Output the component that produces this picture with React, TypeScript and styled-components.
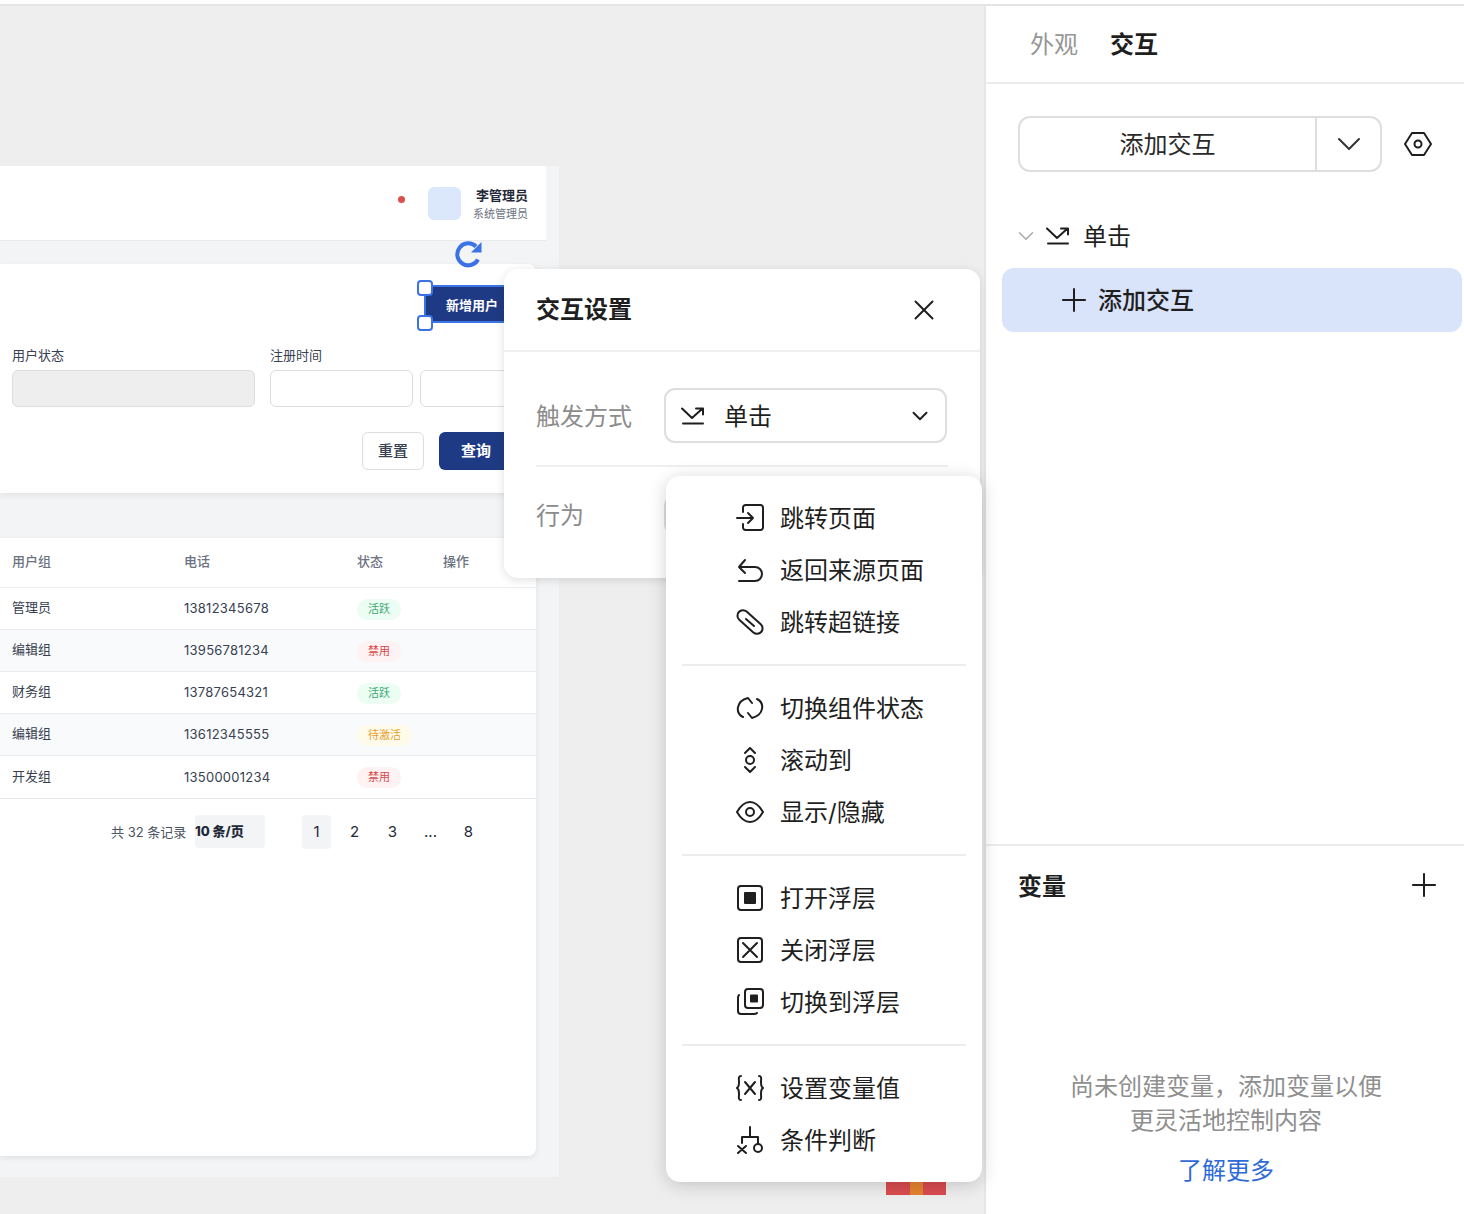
import React from 'react';
import styled, { createGlobalStyle } from 'styled-components';
import { ChevronDown, Plus, X } from 'lucide-react';

const GlobalStyle = createGlobalStyle`
  html, body { margin: 0; padding: 0; background: #fff; }
  body { font-family: Inter, "Noto Sans CJK SC", sans-serif; color: #1f1f1f; }
  * { box-sizing: border-box; }
`;

const users = [
  { group: '管理员', phone: '13812345678', status: '活跃', tone: 'green' },
  { group: '编辑组', phone: '13956781234', status: '禁用', tone: 'red' },
  { group: '财务组', phone: '13787654321', status: '活跃', tone: 'green' },
  { group: '编辑组', phone: '13612345555', status: '待激活', tone: 'amber' },
  { group: '开发组', phone: '13500001234', status: '禁用', tone: 'red' },
];

const tones: Record<string, { bg: string; fg: string }> = {
  green: { bg: '#ecfdf3', fg: '#3aa872' },
  red: { bg: '#fef2f2', fg: '#d9474a' },
  amber: { bg: '#fffbeb', fg: '#e59e2e' },
};

const IconSvg = styled.svg.attrs({ fill: 'none', stroke: 'currentColor' })<{ $w?: number; $h?: number }>`
  display: block;
  flex: none;
  width: ${(p) => p.$w ?? 28}px;
  height: ${(p) => p.$h ?? 28}px;
  stroke-width: 2;
  stroke-linecap: round;
  stroke-linejoin: round;
`;

const ClickIcon = () => (
  <IconSvg viewBox="0 0 23 18" $w={23} $h={18}>
    <path d="M1 1.5 L11 11 L21.5 1.5 M15 1.5 H22 V7.5" />
    <path d="M2 16.5 H22" />
  </IconSvg>
);

const HexIcon = () => (
  <IconSvg viewBox="0 0 28 26" $w={28} $h={26}>
    <path d="M8 2 H20 L27 13 L20 24 H8 L1 13 Z" />
    <circle cx="14" cy="13" r="3.5" />
  </IconSvg>
);

const menuIcons: Record<string, React.ReactNode> = {
  jump: (
    <>
      <path d="M7 8 V3.5 A2.5 2.5 0 0 1 9.5 1 H24.5 A2.5 2.5 0 0 1 27 3.5 V23.5 A2.5 2.5 0 0 1 24.5 26 H9.5 A2.5 2.5 0 0 1 7 23.5 V20" />
      <path d="M1 14 H17 M12 9 L17 14 L12 19" />
    </>
  ),
  back: <path d="M9 4 L3 11 L9 17 M3 11 H19 A7 7 0 0 1 19 25 H3" />,
  link: (
    <>
      <rect x="-1" y="8.5" width="30" height="11" rx="5.5" transform="rotate(42 14 14)" />
      <path d="M10 11 L18 18" />
    </>
  ),
  toggle: (
    <>
      <path d="M7 23 C-1 19 0 7 12 4 L16 9" />
      <path d="M21 5 C29 9 28 21 16 24 L12 19" />
    </>
  ),
  scroll: (
    <>
      <path d="M9 7 L14 2 L19 7 M9 21 L14 26 L19 21" />
      <circle cx="14" cy="14" r="4" />
    </>
  ),
  eye: (
    <>
      <path d="M1 14 C5 7 9 4 14 4 C19 4 23 7 27 14 C23 21 19 24 14 24 C9 24 5 21 1 14 Z" />
      <circle cx="14" cy="14" r="4" />
    </>
  ),
  open: (
    <>
      <rect x="2" y="2" width="24" height="24" rx="3" />
      <rect x="8" y="8" width="12" height="12" rx="1" fill="currentColor" stroke="none" />
    </>
  ),
  close: (
    <>
      <rect x="2" y="2" width="24" height="24" rx="3" />
      <path d="M7 7 L21 21 M21 7 L7 21" />
    </>
  ),
  swap: (
    <>
      <rect x="9" y="1" width="18" height="19" rx="3" />
      <rect x="14" y="6.5" width="8" height="8" rx="1" fill="currentColor" stroke="none" />
      <path d="M3 7 C2 8 2 9 2 10 V23 A3 3 0 0 0 5 26 H18 C19 26 20 26 21 25" />
    </>
  ),
  variable: (
    <>
      <path d="M5 2 C2 2 3 5 3 8 C3 11 3 13 1 14 C3 15 3 17 3 20 C3 23 2 26 5 26" />
      <path d="M23 2 C26 2 25 5 25 8 C25 11 25 13 27 14 C25 15 25 17 25 20 C25 23 26 26 23 26" />
      <path d="M9 8 L19 20 M19 8 L9 20" />
    </>
  ),
  branch: (
    <>
      <path d="M14 1 V11 M6 17 V11 H22 V17" />
      <path d="M2 20 L10 27 M10 20 L2 27" />
      <circle cx="22" cy="22" r="4" />
    </>
  ),
};

const menuGroups = [
  [
    { icon: 'jump', label: '跳转页面' },
    { icon: 'back', label: '返回来源页面' },
    { icon: 'link', label: '跳转超链接' },
  ],
  [
    { icon: 'toggle', label: '切换组件状态' },
    { icon: 'scroll', label: '滚动到' },
    { icon: 'eye', label: '显示/隐藏' },
  ],
  [
    { icon: 'open', label: '打开浮层' },
    { icon: 'close', label: '关闭浮层' },
    { icon: 'swap', label: '切换到浮层' },
  ],
  [
    { icon: 'variable', label: '设置变量值' },
    { icon: 'branch', label: '条件判断' },
  ],
];

export default function App() {
  return (
    <>
      <GlobalStyle />
      <Page>
        <TopStrip />
        <Main>
          <Canvas>
            <Artboard>
              <AppHeader>
                <Dot />
                <Avatar />
                <UserInfo>
                  <UserName>李管理员</UserName>
                  <UserRole>系统管理员</UserRole>
                </UserInfo>
              </AppHeader>

              <FilterCard>
                <Toolbar>
                  <SelectedWrap>
                    <PrimaryButton $w={96} $h={38} $size={13}>新增用户</PrimaryButton>
                    <RotateHandle viewBox="0 0 30 30">
                      <path d="M24 19.5 A11 11 0 1 1 22 6.5" />
                      <polygon points="27.5,2 27.5,12.5 17,12.5" />
                    </RotateHandle>
                    <ResizeHandle $top={-5} />
                    <ResizeHandle $top={30} />
                  </SelectedWrap>
                </Toolbar>
                <Fields>
                  <Field $w={243}>
                    <FieldLabel>用户状态</FieldLabel>
                    <InputBox $filled />
                  </Field>
                  <Field>
                    <FieldLabel>注册时间</FieldLabel>
                    <DateRow>
                      <InputBox $w={143} />
                      <InputBox $w={100} />
                    </DateRow>
                  </Field>
                </Fields>
                <Actions>
                  <GhostButton>重置</GhostButton>
                  <QueryButton>查询</QueryButton>
                </Actions>
              </FilterCard>

              <TableCard>
                <UserTable>
                  <thead>
                    <tr>
                      <HeadCell $w={172}>用户组</HeadCell>
                      <HeadCell $w={173}>电话</HeadCell>
                      <HeadCell $w={86}>状态</HeadCell>
                      <HeadCell>操作</HeadCell>
                    </tr>
                  </thead>
                  <tbody>
                    {users.map((u, i) => (
                      <BodyRow key={u.phone} $alt={i % 2 === 1}>
                        <GroupCell>{u.group}</GroupCell>
                        <PhoneCell>{u.phone}</PhoneCell>
                        <td><Badge $tone={u.tone}>{u.status}</Badge></td>
                        <td />
                      </BodyRow>
                    ))}
                  </tbody>
                </UserTable>
                <Pagination>
                  <Total>共 32 条记录</Total>
                  <PageSize>10 条/页</PageSize>
                  <Pager>
                    <PageItem $active>1</PageItem>
                    <PageItem>2</PageItem>
                    <PageItem>3</PageItem>
                    <PageItem>...</PageItem>
                    <PageItem>8</PageItem>
                  </Pager>
                </Pagination>
              </TableCard>
            </Artboard>

            <RedBar><OrangeChunk /></RedBar>

            <Modal>
              <ModalHeader>
                <ModalTitle>交互设置</ModalTitle>
                <X size={34} strokeWidth={1.4} />
              </ModalHeader>
              <ModalBody>
                <FormRow>
                  <FormLabel>触发方式</FormLabel>
                  <SelectBox>
                    <ClickIcon />
                    <SelectText>单击</SelectText>
                    <ChevronDown size={26} strokeWidth={1.8} />
                  </SelectBox>
                </FormRow>
                <ModalDivider />
                <FormRow>
                  <FormLabel>行为</FormLabel>
                  <SelectBox $short />
                </FormRow>
              </ModalBody>
            </Modal>

            <Menu>
              {menuGroups.map((group, i) => (
                <MenuGroup key={i}>
                  {group.map((item) => (
                    <MenuItem key={item.label}>
                      <IconSvg viewBox="0 0 28 28">{menuIcons[item.icon]}</IconSvg>
                      <RaisedText>{item.label}</RaisedText>
                    </MenuItem>
                  ))}
                </MenuGroup>
              ))}
            </Menu>
          </Canvas>

          <SidePanel>
            <Tabs>
              <Tab>外观</Tab>
              <Tab $active>交互</Tab>
            </Tabs>
            <InteractionSection>
              <AddRow>
                <SplitButton>
                  <SplitMain>添加交互</SplitMain>
                  <SplitCaret><ChevronDown size={40} strokeWidth={1.2} /></SplitCaret>
                </SplitButton>
                <HexIcon />
              </AddRow>
              <TreeRow>
                <MutedChevron><ChevronDown size={26} strokeWidth={1.3} /></MutedChevron>
                <ClickIcon />
                <TreeLabel>单击</TreeLabel>
              </TreeRow>
              <AddAction>
                <Plus size={38} strokeWidth={1.26} />
                <RaisedText>添加交互</RaisedText>
              </AddAction>
            </InteractionSection>
            <VariableSection>
              <VariableHead>
                <SectionTitle>变量</SectionTitle>
                <Plus size={38} strokeWidth={1.26} />
              </VariableHead>
              <EmptyText>
                尚未创建变量，添加变量以便
                <br />
                更灵活地控制内容
              </EmptyText>
              <LearnMore>了解更多</LearnMore>
            </VariableSection>
          </SidePanel>
        </Main>
      </Page>
    </>
  );
}

const Page = styled.div`
  width: 1464px;
  height: 1214px;
  display: flex;
  flex-direction: column;
  overflow: hidden;
`;

const TopStrip = styled.div`
  height: 6px;
  flex: none;
  background: #fff;
  border-bottom: 2px solid #e4e4e4;
`;

const Main = styled.div`
  flex: 1;
  min-height: 0;
  display: flex;
`;

const Canvas = styled.div`
  position: relative;
  width: 984px;
  flex: none;
  padding-top: 160px;
  background: #eeeeee;
`;

const Artboard = styled.div`
  width: 559px;
  height: 1011px;
  background: #f3f4f6;
`;

const AppHeader = styled.header`
  width: 546px;
  height: 75px;
  display: flex;
  align-items: center;
  justify-content: flex-end;
  padding: 0 18px 0 0;
  background: #fff;
  border-bottom: 1px solid #e8eaee;
`;

const Dot = styled.span`
  width: 7px;
  height: 7px;
  border-radius: 50%;
  background: #dc4f4a;
  margin: 0 23px 8px 0;
`;

const Avatar = styled.span`
  width: 33px;
  height: 33px;
  border-radius: 6px;
  background: #dbe7fb;
  margin-right: 12px;
`;

const UserInfo = styled.div`
  display: flex;
  flex-direction: column;
  align-items: flex-end;
`;

const UserName = styled.span`
  font-size: 13px;
  line-height: 18px;
  font-weight: 600;
  color: #1f2937;
`;

const UserRole = styled.span`
  margin: 2px 0 -2px;
  font-size: 11px;
  line-height: 16px;
  color: #6b7280;
`;

const FilterCard = styled.section`
  width: 536px;
  height: 229px;
  margin-top: 23px;
  padding: 21px 16px 0 12px;
  background: #fff;
  border-radius: 0 8px 8px 0;
  box-shadow: 0 2px 6px rgba(0, 0, 0, 0.08);
`;

const Toolbar = styled.div`
  display: flex;
  justify-content: flex-end;
`;

const SelectedWrap = styled.div`
  position: relative;
  outline: 2px solid #3b73e6;
  outline-offset: -2px;
`;

const PrimaryButton = styled.div<{ $w: number; $h: number; $size: number }>`
  width: ${(p) => p.$w}px;
  height: ${(p) => p.$h}px;
  display: flex;
  align-items: center;
  justify-content: center;
  background: #1f3a84;
  color: #fff;
  font-size: ${(p) => p.$size}px;
  font-weight: 600;
`;

const RotateHandle = styled.svg`
  position: absolute;
  left: 30px;
  top: -45px;
  width: 30px;
  height: 30px;
  fill: none;
  path { stroke: #3b73e6; stroke-width: 4; }
  polygon { fill: #3b73e6; }
`;

const ResizeHandle = styled.span<{ $top: number }>`
  position: absolute;
  left: -7px;
  top: ${(p) => p.$top}px;
  width: 16px;
  height: 16px;
  border: 2px solid #3b73e6;
  border-radius: 4px;
  background: #fff;
`;

const Fields = styled.div`
  display: flex;
  gap: 15px;
  margin-top: 25px;
`;

const Field = styled.div<{ $w?: number }>`
  width: ${(p) => (p.$w ? `${p.$w}px` : 'auto')};
`;

const FieldLabel = styled.div`
  font-size: 13px;
  line-height: 15px;
  margin-bottom: 7px;
  color: #374151;
`;

const DateRow = styled.div`
  display: flex;
  gap: 7px;
`;

const InputBox = styled.div<{ $filled?: boolean; $w?: number }>`
  width: ${(p) => (p.$w ? `${p.$w}px` : '100%')};
  height: 37px;
  border: 1px solid #dcdde0;
  border-radius: 6px;
  background: ${(p) => (p.$filled ? '#eeeeee' : '#fff')};
`;

const Actions = styled.div`
  display: flex;
  justify-content: flex-end;
  gap: 15px;
  margin-top: 25px;
  padding-right: 7px;
`;

const GhostButton = styled.div`
  width: 62px;
  height: 38px;
  display: flex;
  align-items: center;
  justify-content: center;
  padding-bottom: 4px;
  border: 1px solid #dcdde0;
  border-radius: 6px;
  font-size: 15px;
  font-weight: 500;
  color: #374151;
`;

const QueryButton = styled.div`
  width: 74px;
  height: 38px;
  display: flex;
  align-items: center;
  justify-content: center;
  padding-bottom: 4px;
  border-radius: 6px;
  background: #1f3a84;
  color: #fff;
  font-size: 15px;
  font-weight: 600;
`;

const TableCard = styled.section`
  width: 536px;
  height: 618px;
  margin-top: 45px;
  background: #fff;
  border-radius: 0 0 8px 0;
  box-shadow: 0 2px 6px rgba(0, 0, 0, 0.08);
`;

const UserTable = styled.table`
  width: 100%;
  border-collapse: collapse;
  table-layout: fixed;
  font-size: 13px;
  color: #374151;
  td { height: 42px; padding: 0 0 0 12px; }
  tr:last-child td { height: 43px; }
`;

const HeadCell = styled.th<{ $w?: number }>`
  width: ${(p) => (p.$w ? `${p.$w}px` : 'auto')};
  height: 49px;
  padding: 0 0 3px 12px;
  text-align: left;
  font-size: 13px;
  font-weight: 500;
  color: #6b7280;
  border-bottom: 1px solid #eceef1;
`;

const BodyRow = styled.tr<{ $alt: boolean }>`
  background: ${(p) => (p.$alt ? '#f9fafb' : '#fff')};
  border-bottom: 1px solid #e8eaee;
`;

const GroupCell = styled.td`
  && { padding-bottom: 3px; }
`;

const PhoneCell = styled.td`
  letter-spacing: 0.25px;
`;

const Badge = styled.span<{ $tone: string }>`
  display: inline-block;
  position: relative;
  top: 1px;
  padding: 0 11px;
  height: 21px;
  line-height: 21px;
  border-radius: 11px;
  font-size: 11px;
  background: ${(p) => tones[p.$tone].bg};
  color: ${(p) => tones[p.$tone].fg};
`;

const Pagination = styled.div`
  display: flex;
  align-items: center;
  margin-top: 16px;
  padding-left: 111px;
`;

const Total = styled.span`
  font-size: 13px;
  color: #4b5563;
  width: 84px;
  flex: none;
`;

const PageSize = styled.span`
  width: 70px;
  height: 33px;
  display: flex;
  align-items: center;
  padding-bottom: 2px;
  border-radius: 4px;
  background: #f3f4f6;
  font-size: 13px;
  font-weight: 800;
  color: #1f2937;
`;

const Pager = styled.div`
  display: flex;
  gap: 9px;
  margin-left: 37px;
`;

const PageItem = styled.span<{ $active?: boolean }>`
  width: 29px;
  height: 34px;
  display: flex;
  align-items: center;
  justify-content: center;
  border-radius: 4px;
  font-size: 15px;
  color: #1f2937;
  background: ${(p) => (p.$active ? '#f3f4f6' : 'transparent')};
`;

const RedBar = styled.div`
  position: absolute;
  left: 886px;
  top: 1170px;
  width: 60px;
  height: 19px;
  display: flex;
  justify-content: center;
  background: #d94c50;
`;

const OrangeChunk = styled.span`
  width: 13px;
  background: #e5832f;
`;

const Modal = styled.section`
  position: absolute;
  left: 504px;
  top: 263px;
  width: 476px;
  height: 309px;
  background: #fff;
  border-radius: 14px;
  box-shadow: 0 2px 10px rgba(0, 0, 0, 0.13);
`;

const ModalHeader = styled.div`
  height: 83px;
  display: flex;
  align-items: center;
  justify-content: space-between;
  padding: 0 39px 0 32px;
  border-bottom: 2px solid #efefef;
`;

const ModalTitle = styled.h2`
  margin: 0;
  font-size: 24px;
  line-height: 34px;
  font-weight: 600;
  color: #1f1f1f;
`;

const ModalBody = styled.div`
  padding: 36px 32px 0;
`;

const FormRow = styled.div`
  display: flex;
  align-items: center;
`;

const FormLabel = styled.span`
  width: 128px;
  flex: none;
  margin-top: 2px;
  font-size: 24px;
  line-height: 34px;
  color: #8c8c8c;
`;

const SelectBox = styled.div<{ $short?: boolean }>`
  width: 283px;
  height: ${(p) => (p.$short ? 40 : 55)}px;
  display: flex;
  align-items: center;
  padding: 0 12px 0 15px;
  border: 2px solid #dedede;
  border-radius: 11px;
  color: #1f1f1f;
`;

const SelectText = styled.span`
  flex: 1;
  margin: 2px 0 0 20px;
  font-size: 24px;
  line-height: 34px;
`;

const ModalDivider = styled.div`
  height: 2px;
  margin: 22px 0 28px;
  background: #efefef;
`;

const Menu = styled.div`
  position: absolute;
  left: 666px;
  top: 470px;
  width: 316px;
  height: 706px;
  padding: 16px 16px 0;
  background: #fff;
  border-radius: 14px;
  box-shadow: 0 3px 18px rgba(0, 0, 0, 0.18);
`;

const MenuGroup = styled.div`
  padding-bottom: 16px;
  margin-bottom: 16px;
  border-bottom: 2px solid #ececec;
  &:last-child { border-bottom: none; margin-bottom: 0; }
`;

const MenuItem = styled.div`
  height: 52px;
  display: flex;
  align-items: center;
  gap: 16px;
  padding-left: 54px;
  font-size: 24px;
  color: #1f1f1f;
`;

const RaisedText = styled.span`
  margin-bottom: 4px;
`;

const SidePanel = styled.aside`
  flex: 1;
  min-width: 0;
  display: flex;
  flex-direction: column;
  background: #fff;
  border-left: 2px solid #e6e6e6;
`;

const Tabs = styled.div`
  height: 78px;
  flex: none;
  display: flex;
  align-items: center;
  gap: 32px;
  padding: 0 0 4px 44px;
  border-bottom: 2px solid #ececec;
`;

const Tab = styled.span<{ $active?: boolean }>`
  font-size: 24px;
  font-weight: ${(p) => (p.$active ? 700 : 400)};
  color: ${(p) => (p.$active ? '#1f1f1f' : '#969696')};
`;

const InteractionSection = styled.div`
  flex: 1;
  min-height: 0;
  padding: 32px 2px 0 16px;
`;

const AddRow = styled.div`
  display: flex;
  align-items: center;
  gap: 22px;
  padding-left: 16px;
`;

const SplitButton = styled.div`
  width: 364px;
  height: 56px;
  display: flex;
  border: 2px solid #dedede;
  border-radius: 12px;
`;

const SplitMain = styled.div`
  flex: 1;
  display: flex;
  align-items: center;
  justify-content: center;
  padding-bottom: 4px;
  font-size: 24px;
  color: #2a2a2a;
  border-right: 2px solid #dedede;
`;

const SplitCaret = styled.div`
  width: 63px;
  display: flex;
  align-items: center;
  justify-content: center;
  color: #333;
`;

const TreeRow = styled.div`
  height: 34px;
  display: flex;
  align-items: center;
  margin-top: 47px;
  padding-left: 11px;
`;

const MutedChevron = styled.span`
  display: flex;
  margin-right: 7px;
  color: #a6a6a6;
`;

const TreeLabel = styled.span`
  margin: 0 0 4px 14px;
  font-size: 24px;
  color: #1f1f1f;
`;

const AddAction = styled.div`
  height: 64px;
  margin-top: 15px;
  display: flex;
  align-items: center;
  gap: 5px;
  padding-left: 53px;
  border-radius: 12px;
  background: #d9e3fa;
  font-size: 24px;
  font-weight: 500;
  color: #1f1f1f;
`;

const VariableSection = styled.div`
  height: 370px;
  flex: none;
  padding: 0 21px 0 32px;
  border-top: 2px solid #ececec;
  display: flex;
  flex-direction: column;
`;

const VariableHead = styled.div`
  display: flex;
  align-items: center;
  justify-content: space-between;
  margin-top: 22px;
  height: 34px;
`;

const SectionTitle = styled.h3`
  margin: 0 0 2px;
  font-size: 24px;
  font-weight: 700;
  color: #1f1f1f;
`;

const EmptyText = styled.p`
  margin: 168px 9px 0 0;
  text-align: center;
  font-size: 24px;
  line-height: 34px;
  color: #8f8f8f;
  white-space: nowrap;
`;

const LearnMore = styled.a`
  margin: 16px 9px 0 0;
  text-align: center;
  font-size: 24px;
  line-height: 34px;
  color: #2f6bd6;
`;
